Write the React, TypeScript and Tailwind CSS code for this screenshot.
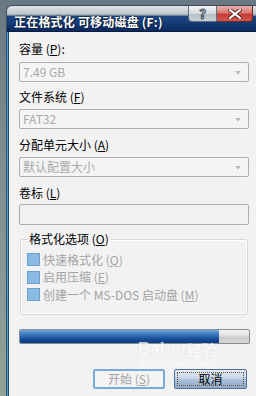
import React from "react";

const U = ({ c }: { c: string }) => <span className="underline underline-offset-1">{c}</span>;

function Label({ children }: { children: React.ReactNode }) {
  return <div className="h-[14px] leading-[14px] text-[12px] text-black">{children}</div>;
}

function Combo({ value }: { value: string }) {
  return (
    <div className="h-[20px] w-[230px] border border-[#a7aeb6] rounded-[2px] bg-[#f4f4f4] flex items-center pl-[3px] pr-[7px]">
      <span className="flex-1 text-[12px] leading-[14px] text-[#a9a9a9]">{value}</span>
      <svg width="6" height="4" viewBox="0 0 6 4" className="mt-[2px]">
        <path d="M0 0H6L3 3.5Z" fill="#b3b9bf" />
      </svg>
    </div>
  );
}

function Check({ children }: { children: React.ReactNode }) {
  return (
    <div className="h-[17.5px] flex items-center gap-[3px]">
      <div className="w-[13px] h-[13px] border border-[#6a9fd2] bg-[#8cbbe2]" />
      <span className="text-[12px] leading-[14px] text-[#a3a3a3]">{children}</span>
    </div>
  );
}

export default function App() {
  return (
    <div className="relative w-[256px] h-[396px] overflow-hidden bg-[linear-gradient(to_bottom,#6a7883_0%,#7f8d92_40%,#95a096_100%)] pt-[5px] pl-[6px] font-['Noto_Sans_CJK_SC',sans-serif]">
      <div className="w-[250px] h-[391px] rounded-tl-[6px] overflow-hidden border-l border-t border-[#3c4c5c] flex flex-col">
        {/* Title bar */}
        <div className="h-[26px] flex bg-[linear-gradient(to_bottom,#dfe2e5_0%,#c2c8ce_30%,#9aa3ac_36%,#1d4580_42%,#143a74_70%,#0b2a60_100%)] border-b border-[#0a1c3e]">
          <div className="self-end pb-[2px] pl-[7px] text-white font-bold text-[12px] leading-[14px] tracking-[0.2px] [text-shadow:0_0_2px_#000]">
            正在格式化 可移动磁盘 (F:)
          </div>
          <div className="ml-auto flex items-start mr-[3px]">
            <div className="w-[29px] h-[17px] mt-[-1px] rounded-bl-[4px] border border-[#5f6e7d] bg-[linear-gradient(to_bottom,#f2f4f6_0%,#d4d9de_50%,#b7c0c8_55%,#c9d0d6_100%)] flex items-center justify-center text-white font-bold text-[13px] leading-none [-webkit-text-stroke:1px_#3a4450]">
              ?
            </div>
            <div className="w-[36px] h-[17px] mt-[-1px] rounded-br-[4px] border border-[#6a2a2a] border-l-0 bg-[linear-gradient(to_bottom,#eab0ac_0%,#d97a74_45%,#c63b33_55%,#d4574c_100%)] flex items-center justify-center">
              <svg width="14" height="10" viewBox="0 0 14 10">
                <path d="M2 1L12 9M12 1L2 9" stroke="#5a2a2a" strokeWidth="4" strokeLinecap="square" />
                <path d="M2 1L12 9M12 1L2 9" stroke="#ffffff" strokeWidth="2" strokeLinecap="square" />
              </svg>
            </div>
          </div>
        </div>
        {/* Body with left frame */}
        <div className="flex-1 flex">
          <div className="w-[1px] bg-[#3fa6dc]" />
          <div className="w-[1px] bg-[#1d4a74]" />
          <div className="flex-1 bg-[#f2f2f2] pl-[10px] pt-[10px] flex flex-col">
            <Label>
              容量 (<U c="P" />):
            </Label>
            <div className="mt-[6px]">
              <Combo value="7.49 GB" />
            </div>
            <div className="mt-[8px]">
              <Label>
                文件系统 (<U c="F" />)
              </Label>
            </div>
            <div className="mt-[5px]">
              <Combo value="FAT32" />
            </div>
            <div className="mt-[9px]">
              <Label>
                分配单元大小 (<U c="A" />)
              </Label>
            </div>
            <div className="mt-[5px]">
              <Combo value="默认配置大小" />
            </div>
            <div className="mt-[9px]">
              <Label>
                卷标 (<U c="L" />)
              </Label>
            </div>
            <div className="mt-[4px] h-[21px] w-[230px] border border-[#a7aeb6] rounded-[2px] bg-[#f2f2f2]" />
            {/* Group box */}
            <div className="mt-[14px] ml-[1px] w-[228px] h-[76px] border border-[#d4d9de] rounded-[3px] shadow-[inset_0_0_0_1px_#ffffff] relative flex flex-col pl-[6px] pt-[11px]">
              <div className="absolute left-[7px] top-[-8px] bg-[#f2f2f2] px-[1px] text-[12px] leading-[14px] text-black">
                格式化选项 (<U c="O" />)
              </div>
              <Check>
                快速格式化 (<U c="Q" />)
              </Check>
              <Check>
                启用压缩 (<U c="E" />)
              </Check>
              <Check>
                创建一个 MS-DOS 启动盘 (<U c="M" />)
              </Check>
            </div>
            {/* Progress */}
            <div className="mt-[14px] w-[231px] h-[15px] border border-[#858d95] rounded-[2px] flex overflow-hidden bg-[linear-gradient(to_bottom,#f4f4f4_0%,#e2e2e2_40%,#cbcbcb_60%,#d8d8d8_100%)]">
              <div className="w-[87%] h-full bg-[linear-gradient(to_bottom,#7aaedd_0%,#4c8ccb_20%,#2d6cb2_45%,#164c96_70%,#0c3a80_100%)]" />
            </div>
            {/* Buttons */}
            <div className="mt-[25px] ml-[74px] flex gap-[9px]">
              <div className="w-[72px] h-[20px] border-2 border-[#7aaad8] rounded-[2px] bg-[#f4f4f4] flex items-center justify-center text-[12px] leading-[14px] text-[#a3a3a3]">
                开始 (<U c="S" />)
              </div>
              <div className="w-[73px] h-[20px] border border-[#4b6f9f] rounded-[2px] bg-[linear-gradient(to_bottom,#e3ecf5_0%,#c9d8e8_45%,#a9bfd9_55%,#91abcb_100%)] p-[2px]">
                <div className="w-full h-full border border-dotted border-[#6b5030] flex items-center justify-center text-[12px] leading-[14px] text-black">
                  取消
                </div>
              </div>
            </div>
          </div>
        </div>
      </div>
      {/* Watermark */}
      <div className="absolute left-[138px] top-[340px] flex flex-col items-center pointer-events-none opacity-70">
        <div className="flex items-end gap-[2px] leading-none">
          <span className="text-[17px] font-bold text-white [text-shadow:0_0_1px_#c8c8c8] font-['Liberation_Sans',sans-serif]">Bai</span>
          <span className="text-[15px] font-bold text-white [text-shadow:0_0_1px_#c8c8c8] font-['Liberation_Sans',sans-serif]">du</span>
          <span className="text-[15px] font-bold text-white [text-shadow:0_0_1px_#c8c8c8]">经验</span>
        </div>
        <div className="text-[9px] leading-[10px] text-white font-['Liberation_Sans',sans-serif] mt-[1px]">jingyan.baidu.com</div>
      </div>
    </div>
  );
}
